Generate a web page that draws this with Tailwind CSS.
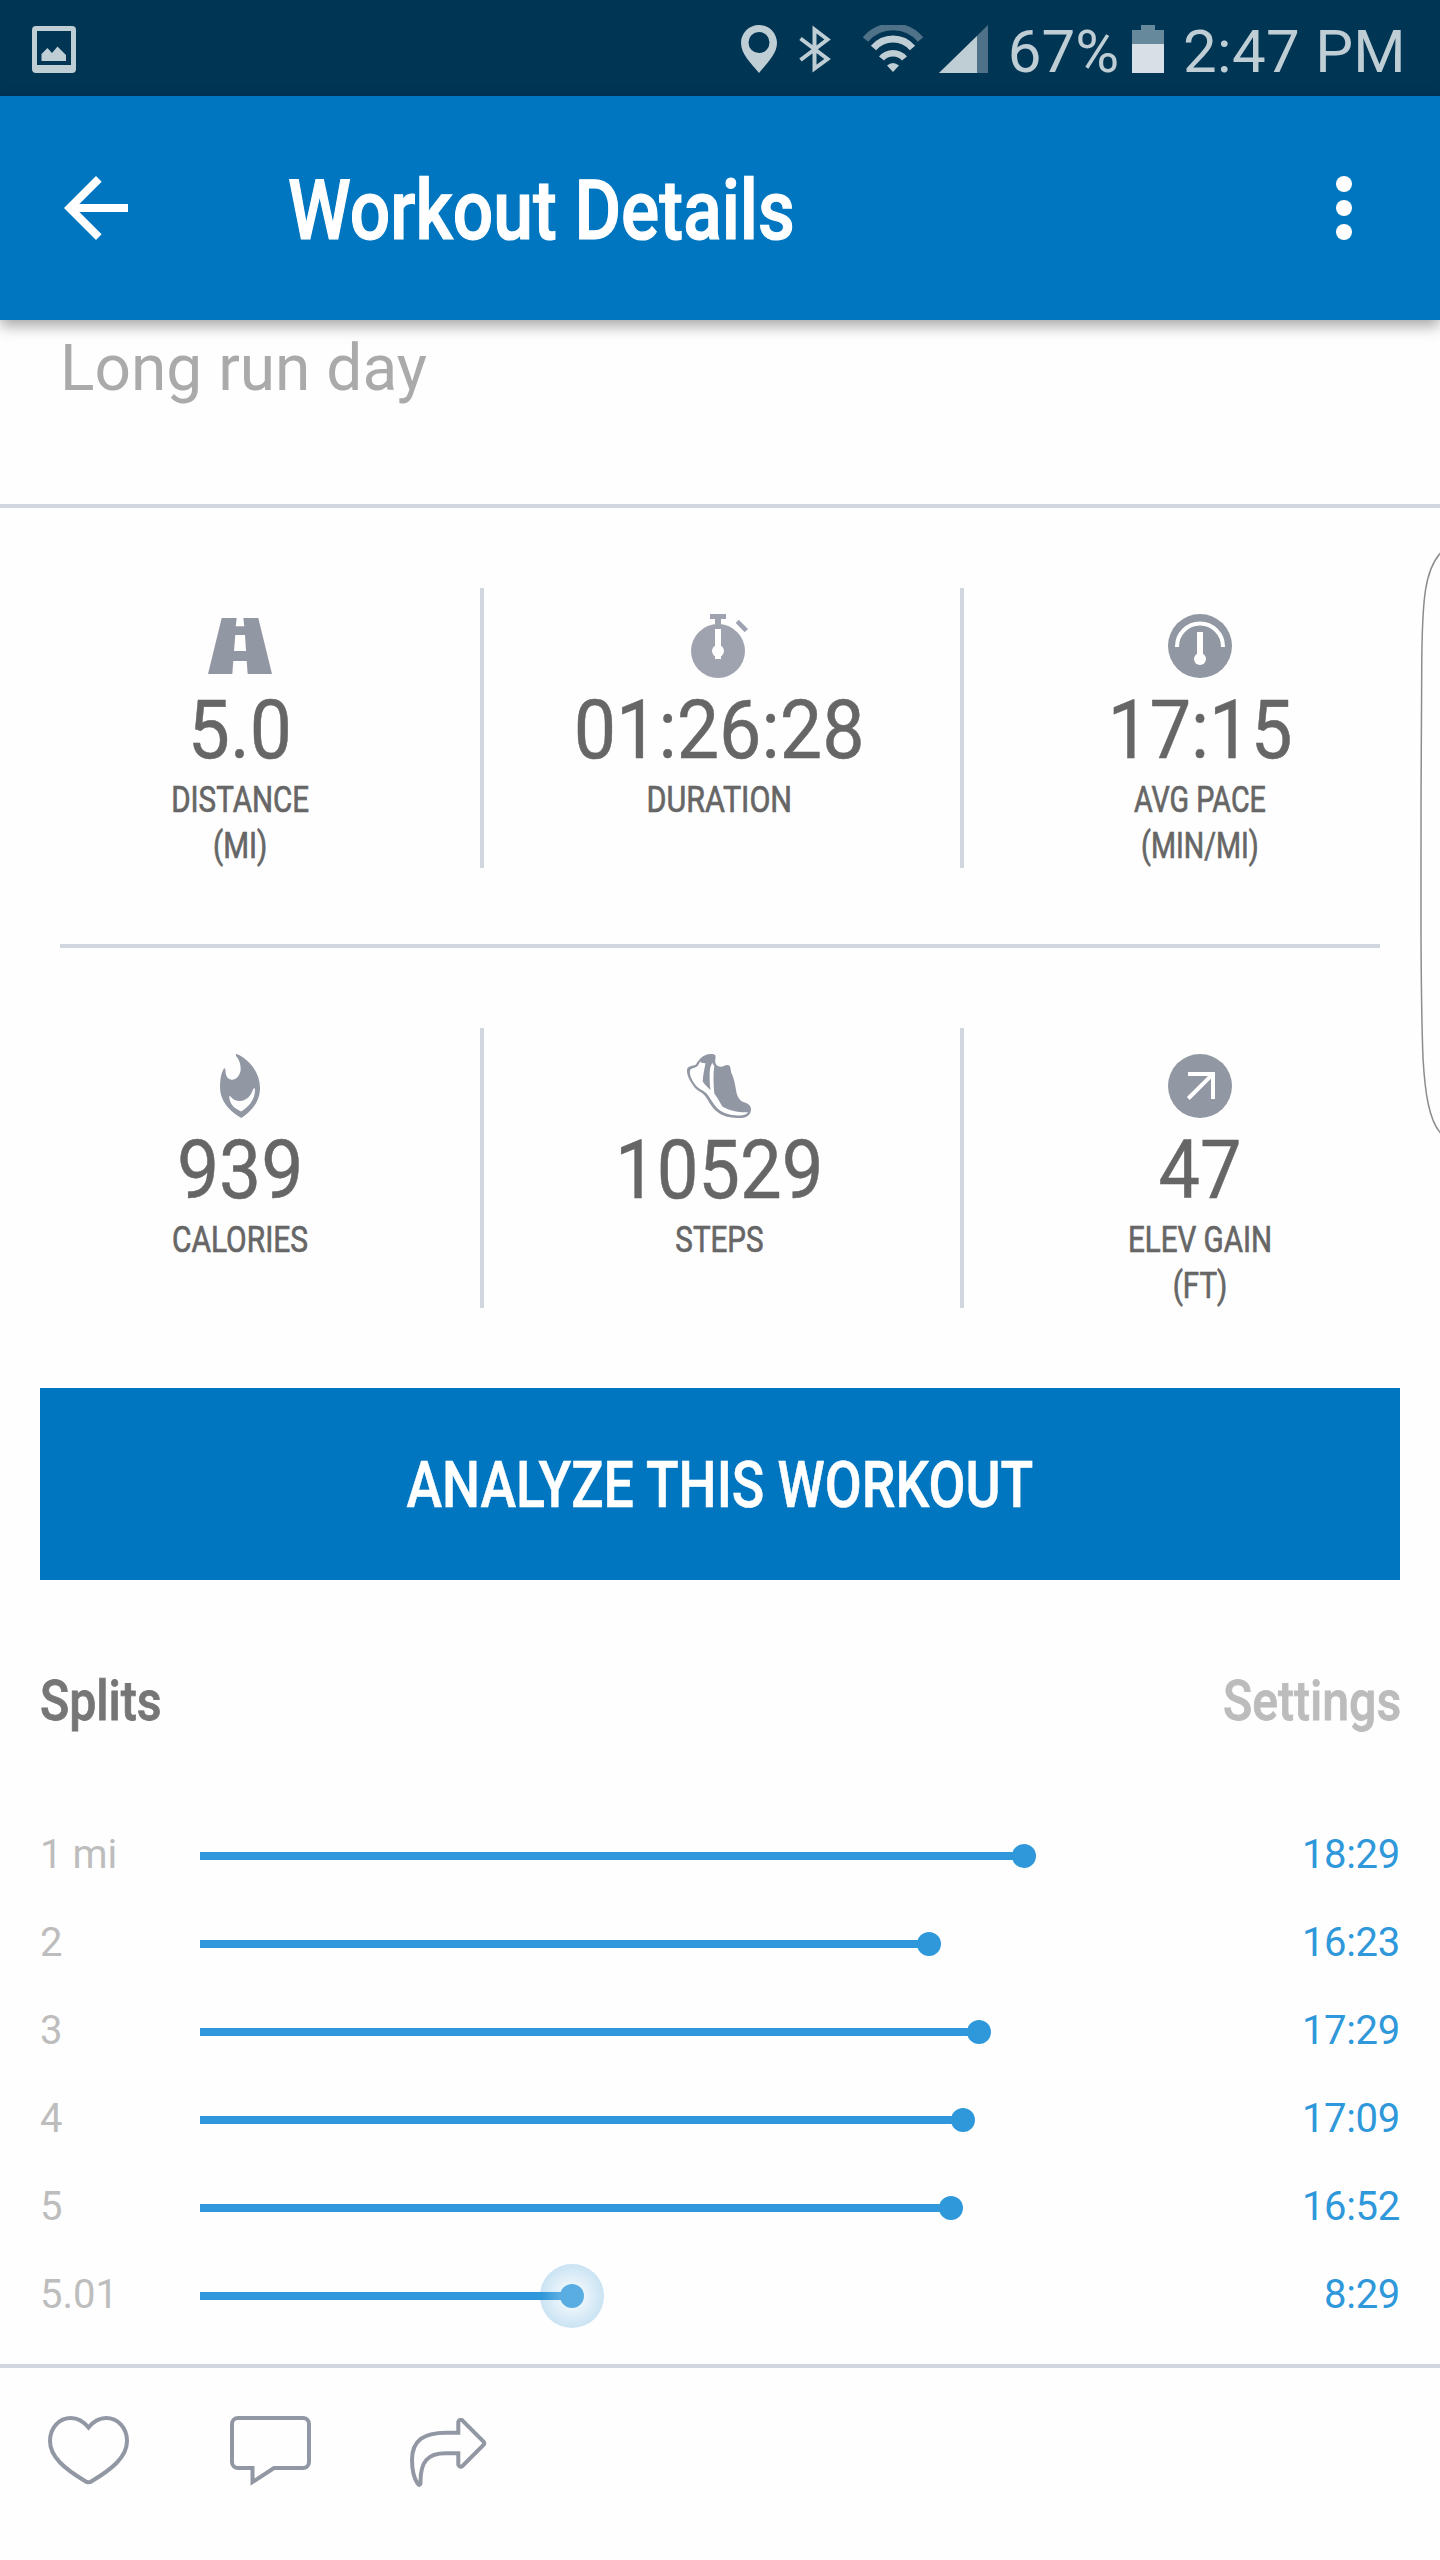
<!DOCTYPE html>
<html lang="en">
<head>
    <meta charset="UTF-8">
    <meta name="viewport" content="width=device-width, initial-scale=1.0">
    <title>Workout Details</title>
    <script src="https://cdn.jsdelivr.net/npm/@tailwindcss/browser@4"></script>
</head>
<body class="bg-[#fefefe] font-['Roboto',sans-serif]">
    <div class="relative w-[1440px] h-[2560px] overflow-hidden flex flex-col">

        <!-- Status bar -->
        <div class="h-24 shrink-0 bg-[#003554] text-[#bfcdd5] flex items-center justify-between pl-8 pr-[34px] pt-0.5">
            <svg class="w-11 h-[47px]" viewBox="0 0 44 47" fill="currentColor">
                <path fill-rule="evenodd" d="M4 0H40a4 4 0 0 1 4 4V43a4 4 0 0 1-4 4H4a4 4 0 0 1-4-4V4a4 4 0 0 1 4-4ZM5 5V39H39V5Z"/>
                <path d="M9.500 35V28L15.500 22L20 27L25.500 20.500L34 29V35Z"/>
            </svg>
            <div class="flex items-center">
                <svg class="w-9 h-12" viewBox="0 0 36 48" fill="currentColor">
                    <path fill-rule="evenodd" d="M18 0C8 0 0 8 0 18C0 29 10 38 18 48C26 38 36 29 36 18C36 8 28 0 18 0ZM18 7A10.500 10.500 0 1 1 18 28A10.500 10.500 0 1 1 18 7Z"/>
                </svg>
                <svg class="w-[33px] h-12 ml-[22px]" viewBox="0 0 33 48" fill="none" stroke="currentColor" stroke-width="4">
                    <path d="M1.500 13.500L28.500 34L15.500 43.500V4.500L28.500 14.500L1.500 35"/>
                </svg>
                <svg class="w-[60px] h-12 ml-[31px]" viewBox="0 0 60 48" fill="none" stroke="currentColor">
                    <path d="M2.500 14.500A36 36 0 0 1 57.500 14.500" stroke="#4f7288" stroke-width="7"/>
                    <path d="M10.500 23A25.500 25.500 0 0 1 49.500 23" stroke-width="7"/>
                    <path d="M18.500 33.500A15 15 0 0 1 41.500 33.500" stroke-width="6.500"/>
                    <path d="M30 47L24 40.500Q30 35.500 36 40.500Z" fill="currentColor" stroke="none"/>
                </svg>
                <svg class="w-[49px] h-12 ml-4" viewBox="0 0 49 48">
                    <path d="M49 0V48H0Z" fill="#4f7288"/>
                    <path d="M38 11V48H0Z" fill="#bfcdd5"/>
                </svg>
                <span class="ml-5 pt-[5px] text-[60px] leading-[60px]">67%</span>
                <svg class="w-8 h-12 ml-[13px]" viewBox="0 0 32 48">
                    <path d="M9 0H23V5H32V19H0V5H9Z" fill="#66899c"/>
                    <path d="M0 19H32V48H0Z" fill="#d9dfe7"/>
                </svg>
                <span class="ml-[19px] pt-[5px] text-[60px] leading-[60px] tracking-[0.3px]">2:47 PM</span>
            </div>
        </div>

        <!-- App bar -->
        <header class="relative h-56 shrink-0 bg-[#0076c1] text-white flex items-center pl-12 pr-12 shadow-[0_6px_14px_rgba(0,0,0,0.35)]">
            <svg class="w-24 h-24" viewBox="0 0 24 24" fill="currentColor">
                <path d="M20 11H7.830l5.590-5.590L12 4l-8 8 8 8 1.410-1.410L7.830 13H20v-2z"/>
            </svg>
            <h1 class="ml-36 pt-1.5 text-[84px] leading-[84px] font-medium whitespace-nowrap origin-left scale-x-[0.85] [-webkit-text-stroke:1.2px]">Workout Details</h1>
            <svg class="w-24 h-24 ml-auto" viewBox="0 0 24 24" fill="currentColor">
                <circle cx="12" cy="6" r="2"/>
                <circle cx="12" cy="12" r="2"/>
                <circle cx="12" cy="18" r="2"/>
            </svg>
        </header>

        <div class="h-[188px] shrink-0 pl-[60px] pt-[17px] border-b-4 border-[#d2d6df] text-[64px] leading-16 text-[#aaaaaa]">Long run day</div>

        <!-- Stats -->
        <section class="shrink-0 text-[#666666] text-center">
            <div class="grid grid-cols-3 pt-20 pb-[76px]">
                <div class="h-[280px] pt-[26px] flex flex-col items-center">
                    <svg class="w-16 h-16 shrink-0" viewBox="0 0 64 64" fill="#9297a4">
                        <path fill-rule="evenodd" d="M13.700 4H28.700L27.700 12.300H36.300L35.300 4H50.300L64 60H39.700L38.700 47H25.300L24.300 60H0ZM27.300 21L26 37H38L37 21Z"/>
                    </svg>
                    <div class="mt-[11px] text-[82px] leading-[82px] scale-x-[0.915] [-webkit-text-stroke:0.5px]">5.0</div>
                    <div class="mt-1.5 text-[36.5px] leading-[46px] scale-x-[0.81] [-webkit-text-stroke:0.7px]">DISTANCE<br>(MI)</div>
                </div>
                <div class="h-[280px] pt-[26px] flex flex-col items-center border-l-4 border-[#d2d6df] pr-1.5">
                    <svg class="w-16 h-16 shrink-0" viewBox="0 0 64 64" fill="#9fa3af">
                        <path d="M23 0H39V5H34V12H28V5H23Z"/>
                        <circle cx="31" cy="37" r="27"/>
                        <path d="M51.700 5.700L61 15L57.700 18.300L48.700 9Z"/>
                        <path d="M28 15H34V45H28Z" fill="#fff"/>
                        <circle cx="31" cy="37" r="6" fill="#fff"/>
                    </svg>
                    <div class="mt-[11px] text-[82px] leading-[82px] scale-x-[0.92] [-webkit-text-stroke:0.5px]">01:26:28</div>
                    <div class="mt-1.5 text-[36.5px] leading-[46px] scale-x-[0.835] [-webkit-text-stroke:0.7px]">DURATION</div>
                </div>
                <div class="h-[280px] pt-[26px] flex flex-col items-center border-l-4 border-[#d2d6df] pr-1">
                    <svg class="w-16 h-16 shrink-0" viewBox="0 0 64 64" fill="none" stroke="#fff">
                        <circle cx="32" cy="32" r="32" fill="#9297a4" stroke="none"/>
                        <path d="M9 33V32.500A23 23 0 0 1 55 32.500V33" stroke-width="4"/>
                        <path d="M32 18V44" stroke-width="6"/>
                        <circle cx="32" cy="45" r="6" fill="#fff" stroke="none"/>
                    </svg>
                    <div class="mt-[11px] text-[82px] leading-[82px] scale-x-[0.905] [-webkit-text-stroke:0.5px]">17:15</div>
                    <div class="mt-1.5 text-[36.5px] leading-[46px] scale-x-[0.785] [-webkit-text-stroke:0.7px]">AVG PACE<br>(MIN/MI)</div>
                </div>
            </div>
            <div class="mx-[60px] h-1 bg-[#d2d6df]"></div>
            <div class="grid grid-cols-3 py-20">
                <div class="h-[280px] pt-[26px] flex flex-col items-center">
                    <svg class="w-16 h-16 shrink-0" viewBox="0 0 64 64" fill="#9297a4">
                        <path fill-rule="evenodd" d="M29 0C42 6 52 19 52 34C52 49 42 58 33.300 64C23 58 12 48 12 33C12 25 13.500 18 16 14.500Q17.500 13.500 17.500 17C17.500 22 20 25.700 24 25.700C29 25.700 32.700 20 32.700 15C32.700 10 31 5 28 2Q27.500 0 29 0ZM21.300 42.300C21 50 27 55 33 57.500C41 53 47.500 45 47 35Q46 33.500 45 35.500C43 42 38 47 32 47C28 47 25 45.500 22.500 42.500Q21.700 41.500 21.300 42.300Z"/>
                    </svg>
                    <div class="mt-[11px] text-[82px] leading-[82px] scale-x-[0.915] [-webkit-text-stroke:0.5px]">939</div>
                    <div class="mt-1.5 text-[36.5px] leading-[46px] scale-x-[0.82] [-webkit-text-stroke:0.7px]">CALORIES</div>
                </div>
                <div class="h-[280px] pt-[26px] flex flex-col items-center border-l-4 border-[#d2d6df] pr-1.5">
                    <svg class="w-16 h-16 shrink-0" viewBox="0 0 64 64" fill="#9297a4">
                        <path d="M24 0C28 0 29 1 28.500 4C27.500 9 29 12.500 34 12.700C36.500 12.700 38 11 40.500 11C43.500 11 43.500 14 44 18C47 24 48 30 49 36C50 43 53 47 57 48.300C61 49.300 64 51.500 64 55.500C64 60 60 64 54.500 64C44 64 35 63 28 56C22 50 20 42.500 15 39C11 36.500 8 35 4.500 29C1 23.500 0 20 0 16.500C0 11.500 5 12.500 9 10.500C11 7 15 0 24 0Z"/>
                        <path fill="#fff" d="M13.500 7.300C14 9.500 16 9 18.500 9.300C17.500 15 16 21 15.700 27.500C18 31 20.500 33 23.500 36C22.500 28 22.500 20 23 15C23.300 12.500 24.500 11 25.300 8.500C25.500 10 26.500 11 27.300 11.700C26 20 26.500 30 27.300 39.500C30 43.500 33 48 35.300 52.500C42 56.500 50 58.500 61 58.300C59 61 56 61.500 53 61.500C46 61.500 39 60.500 33 56.500C26 51.500 24 44 19 39C15 35.500 11.500 35 8 30.500C4.500 25.500 2 20 3.200 16C4.500 14 9 14 11 11.500C12 10 12.500 8.500 13.500 7.300Z"/>
                    </svg>
                    <div class="mt-[11px] text-[82px] leading-[82px] scale-x-[0.905] [-webkit-text-stroke:0.5px]">10529</div>
                    <div class="mt-1.5 text-[36.5px] leading-[46px] scale-x-[0.81] [-webkit-text-stroke:0.7px]">STEPS</div>
                </div>
                <div class="h-[280px] pt-[26px] flex flex-col items-center border-l-4 border-[#d2d6df] pr-1">
                    <svg class="w-16 h-16 shrink-0" viewBox="0 0 64 64" fill="none" stroke="#fff" stroke-width="4">
                        <circle cx="32" cy="32" r="32" fill="#9297a4" stroke="none"/>
                        <path d="M20 20H45V45M20.300 44.500L44.500 20.300"/>
                    </svg>
                    <div class="mt-[11px] text-[82px] leading-[82px] scale-x-[0.9] [-webkit-text-stroke:0.5px]">47</div>
                    <div class="mt-1.5 text-[36.5px] leading-[46px] scale-x-[0.81] [-webkit-text-stroke:0.7px]">ELEV GAIN<br>(FT)</div>
                </div>
            </div>
        </section>

        <button class="h-48 shrink-0 mx-10 bg-[#0076c1] text-white flex items-center justify-center">
            <span class="pt-0.5 text-[65px] leading-[65px] font-medium whitespace-nowrap scale-x-[0.825] [-webkit-text-stroke:0.6px]">ANALYZE THIS WORKOUT</span>
        </button>

        <!-- Splits -->
        <div class="mt-[93px] px-10 shrink-0 flex justify-between text-[56px] leading-[56px] font-medium [-webkit-text-stroke:0.8px]">
            <h2 class="text-[#767676] origin-left scale-x-[0.86]">Splits</h2>
            <span class="text-[#bcbcbc] origin-right translate-x-px scale-x-[0.86]">Settings</span>
        </div>
        <div class="mt-[83px] pl-10 pr-10 shrink-0 text-[40px] leading-10 text-[#bdbdbd]">
            <div class="h-[88px] flex items-center">
                <span class="w-40 pb-0.5">1 mi</span>
                <div class="w-[824px] h-2 bg-[#2e98da]"></div>
                <div class="-ml-3 size-6 rounded-full bg-[#2e98da]"></div>
                <span class="ml-auto pb-0.5 tracking-[-0.3px] text-[#2e98da]">18:29</span>
            </div>
            <div class="h-[88px] flex items-center">
                <span class="w-40 pb-0.5">2</span>
                <div class="w-[729px] h-2 bg-[#2e98da]"></div>
                <div class="-ml-3 size-6 rounded-full bg-[#2e98da]"></div>
                <span class="ml-auto pb-0.5 tracking-[-0.3px] text-[#2e98da]">16:23</span>
            </div>
            <div class="h-[88px] flex items-center">
                <span class="w-40 pb-0.5">3</span>
                <div class="w-[779px] h-2 bg-[#2e98da]"></div>
                <div class="-ml-3 size-6 rounded-full bg-[#2e98da]"></div>
                <span class="ml-auto pb-0.5 tracking-[-0.3px] text-[#2e98da]">17:29</span>
            </div>
            <div class="h-[88px] flex items-center">
                <span class="w-40 pb-0.5">4</span>
                <div class="w-[763px] h-2 bg-[#2e98da]"></div>
                <div class="-ml-3 size-6 rounded-full bg-[#2e98da]"></div>
                <span class="ml-auto pb-0.5 tracking-[-0.3px] text-[#2e98da]">17:09</span>
            </div>
            <div class="h-[88px] flex items-center">
                <span class="w-40 pb-0.5">5</span>
                <div class="w-[751px] h-2 bg-[#2e98da]"></div>
                <div class="-ml-3 size-6 rounded-full bg-[#2e98da]"></div>
                <span class="ml-auto pb-0.5 tracking-[-0.3px] text-[#2e98da]">16:52</span>
            </div>
            <div class="h-[88px] flex items-center">
                <span class="w-40 pb-0.5">5.01</span>
                <div class="w-[372px] h-2 bg-[#2e98da]"></div>
                <div class="relative -ml-3 size-6 rounded-full bg-[#2e98da]">
                    <div class="absolute -inset-5 rounded-full bg-[radial-gradient(circle_closest-side,rgba(255,255,255,0.2)_0%,rgba(190,222,243,0.3)_38%,rgba(46,145,210,0.25)_100%)]"></div>
                </div>
                <span class="ml-auto pb-0.5 tracking-[-0.3px] text-[#2e98da]">8:29</span>
            </div>
        </div>

        <!-- Social actions -->
        <footer class="mt-6 grow border-t-4 border-[#d2d6df] pl-12 pt-12 flex items-start">
            <svg class="w-[81px] h-[70px]" viewBox="0 0 81 70" fill="none" stroke="#9297a4" stroke-width="4">
                <path d="M40.500 11.500C36 6 30 2 23 2C11 2 2 12 2 25C2 41 17 53 37 65Q40.500 67.500 44 65C64 53 79 41 79 25C79 12 70 2 58 2C51 2 45 6 40.500 11.500Z"/>
            </svg>
            <svg class="w-[81px] h-[70px] ml-[101px]" viewBox="0 0 81 70" fill="none" stroke="#9297a4" stroke-width="4">
                <path d="M8 2H73a6 6 0 0 1 6 6V46a6 6 0 0 1-6 6H44L22.500 66V52H8a6 6 0 0 1-6-6V8a6 6 0 0 1 6-6Z"/>
            </svg>
            <svg class="w-[77px] h-[70px] ml-[99px] mt-0.5" viewBox="0 0 77 70" fill="none" stroke="#9297a4" stroke-width="4">
                <path d="M48.300 14.700V4Q49.500 0.500 52.500 2.500L73.500 23.500Q75 25.300 73.500 27L52.500 48Q49.500 50 48.300 46.500V35.300H36C18 35.300 10 43 10.500 65.500Q9.500 68.500 7.500 65.500C4 60 2 52 2 42C2 22 14 14.700 36 14.700Z"/>
            </svg>
        </footer>

        <!-- Edge panel handle -->
        <svg class="absolute right-0 top-[548px] w-5 h-[590px]" viewBox="0 0 20 590" fill="none" stroke="#8c8c8c" stroke-width="1.500">
            <path d="M20.500 5C5 22 2.500 50 1.800 110C1 200 0.800 300 1 390C1.300 440 1.800 480 3 510C5 545 9 572 20.500 585"/>
        </svg>
    </div>
</body>
</html>
